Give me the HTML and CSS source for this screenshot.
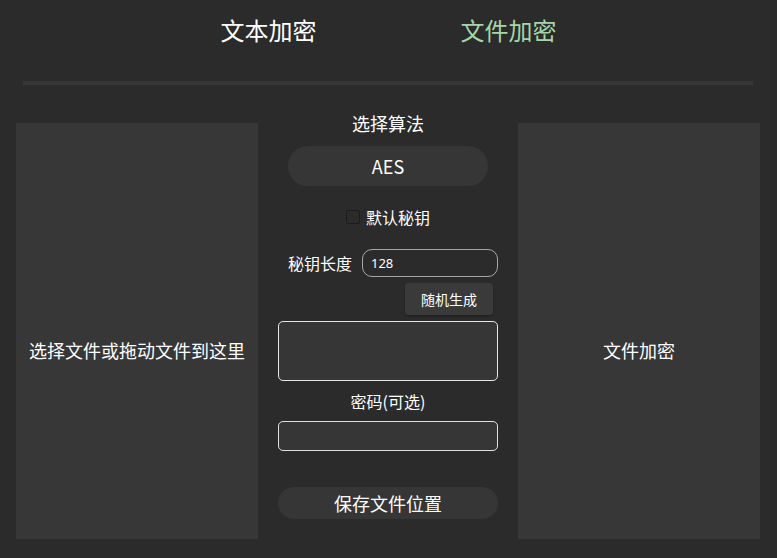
FILE: index.html
```html
<!DOCTYPE html>
<html lang="zh-CN">
<head>
<meta charset="utf-8">
<title>文件加密</title>
<link rel="stylesheet" href="styles.css">
</head>
<body>
<header class="tabs">
  <div class="tab">文本加密</div>
  <div class="tab active">文件加密</div>
</header>
<div class="divider"></div>
<main class="main">
  <div class="panel"><span class="panel-text">选择文件或拖动文件到这里</span></div>
  <div class="center">
    <div class="title">选择算法</div>
    <div class="pill">AES</div>
    <label class="check-row"><span class="checkbox"></span><span>默认秘钥</span></label>
    <div class="key-row">
      <span class="key-label">秘钥长度</span>
      <div class="key-input">128</div>
    </div>
    <div class="btn-row"><div class="btn">随机生成</div></div>
    <div class="textarea"></div>
    <div class="pwd-label">密码(可选)</div>
    <div class="pwd-input"></div>
    <div class="save">保存文件位置</div>
  </div>
  <div class="panel"><span class="panel-text">文件加密</span></div>
</main>
</body>
</html>
```
FILE: styles.css
```css
* { box-sizing: border-box; }
html, body { margin: 0; padding: 0; }
body {
  background: #2b2b2b;
  color: #ffffff;
  font-family: "Noto Sans CJK SC", "Noto Sans", sans-serif;
  width: 777px;
  height: 558px;
  overflow: hidden;
}
.tabs {
  display: flex;
  justify-content: center;
  padding-top: 14px;
}
.tab {
  width: 240px;
  text-align: center;
  font-size: 24px;
  line-height: 32px;
  color: #ffffff;
}
.tab.active { color: #a5d6a7; }
.divider {
  margin: 35px 24px 0 23px;
  height: 4px;
  background: #363636;
}
.main {
  display: flex;
  align-items: flex-start;
  padding-left: 16px;
  margin-top: 26px;
}
.panel {
  width: 242px;
  height: 416px;
  margin-top: 12px;
  background: #373737;
  display: flex;
  align-items: center;
  justify-content: center;
  padding-top: 38px;
}
.panel-text { font-size: 18px; line-height: 24px; }
.center {
  width: 260px;
  display: flex;
  flex-direction: column;
  align-items: center;
}
.title { font-size: 18px; line-height: 24px; }
.pill {
  margin-top: 11px;
  width: 200px;
  height: 40px;
  border-radius: 20px;
  background: #363636;
  font-size: 18px;
  line-height: 40px;
  text-align: center;
}
.check-row {
  margin-top: 21px;
  display: flex;
  align-items: center;
  gap: 6px;
  height: 20px;
  font-size: 16px;
  line-height: 20px;
}
.checkbox {
  width: 14px;
  height: 14px;
  border: 1px solid #1c1c1c;
  border-radius: 2px;
  background: #2b2b2b;
}
.key-row {
  margin-top: 22px;
  width: 220px;
  display: flex;
  justify-content: flex-end;
  align-items: center;
  gap: 10px;
}
.key-label { font-size: 16px; line-height: 20px; }
.key-input {
  width: 136px;
  height: 28px;
  border: 1px solid #a8a8a8;
  border-radius: 10px;
  font-size: 13px;
  line-height: 26px;
  padding-left: 8px;
  font-family: "Noto Sans", "Noto Sans CJK SC", sans-serif;
}
.btn-row {
  margin-top: 6px;
  width: 220px;
  display: flex;
  justify-content: flex-end;
  padding-right: 5px;
}
.btn {
  width: 88px;
  height: 32px;
  background: #3a3a3a;
  border-radius: 3px;
  font-size: 14px;
  line-height: 32px;
  text-align: center;
  box-shadow: 0 1px 2px rgba(0,0,0,0.35);
}
.textarea {
  margin-top: 6px;
  width: 220px;
  height: 60px;
  border: 1px solid #e6e6e6;
  border-radius: 5px;
  background: #363636;
}
.pwd-label {
  margin-top: 10px;
  font-size: 16px;
  line-height: 20px;
}
.pwd-input {
  margin-top: 10px;
  width: 220px;
  height: 30px;
  border: 1px solid #e0e0e0;
  border-radius: 5px;
  background: #363636;
}
.save {
  margin-top: 36px;
  width: 220px;
  height: 32px;
  border-radius: 16px;
  background: #363636;
  font-size: 18px;
  line-height: 32px;
  text-align: center;
}
```
